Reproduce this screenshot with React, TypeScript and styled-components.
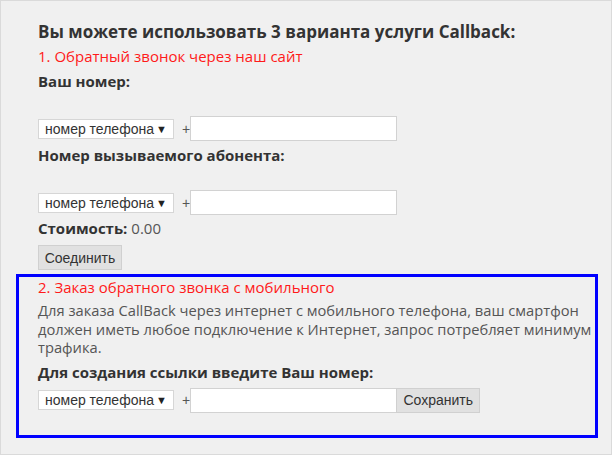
import React from "react";
import styled, { createGlobalStyle } from "styled-components";

const GlobalStyle = createGlobalStyle`
  html, body {
    margin: 0;
    padding: 0;
    background: #ffffff;
  }
  body {
    font-family: "Open Sans", "Liberation Sans", sans-serif;
  }
`;

const Panel = styled.div`
  box-sizing: border-box;
  width: 612px;
  height: 455px;
  border: 1px solid #dadada;
  background: #f0f0f0;
  padding: 18px 13px 0 15px;
`;

const Section = styled.div`
  padding-left: 22px;
`;

const Heading = styled.div`
  font-size: 17px;
  font-weight: 700;
  line-height: 25px;
  color: #333333;
`;

const RedTitle = styled.div<{ $lh?: number }>`
  font-size: 15px;
  line-height: ${(p) => p.$lh ?? 25}px;
  color: #ff1a1a;
`;

const Label = styled.div<{ $mt?: number }>`
  font-size: 15px;
  font-weight: 700;
  line-height: 25px;
  color: #333333;
  margin-top: ${(p) => p.$mt ?? 0}px;
`;

const Row = styled.div<{ $mt?: number }>`
  display: flex;
  align-items: center;
  height: 25px;
  margin-top: ${(p) => p.$mt ?? 0}px;
`;

const SelectBox = styled.div`
  box-sizing: border-box;
  width: 136px;
  height: 20px;
  display: flex;
  align-items: center;
  justify-content: space-between;
  padding: 0 6px 0 6px;
  background: #ffffff;
  border: 1px solid #d6d6d6;
  font-family: "Liberation Sans", Arial, sans-serif;
  font-size: 14px;
  color: #333333;
`;

const Arrow = styled.span`
  font-size: 11px;
  color: #222222;
`;

const Plus = styled.span`
  margin-left: 8px;
  font-family: "Liberation Sans", Arial, sans-serif;
  font-size: 14px;
  color: #555555;
`;

const TextInput = styled.input`
  box-sizing: border-box;
  width: 207px;
  height: 25px;
  margin: 0;
  padding: 0 4px;
  background: #ffffff;
  border: 1px solid #d2d2d2;
  outline: none;
`;

const Button = styled.button<{ $w: number; $join?: boolean }>`
  box-sizing: border-box;
  width: ${(p) => p.$w}px;
  height: 25px;
  margin: 0 0 0 ${(p) => (p.$join ? -1 : 0)}px;
  padding: 0;
  background: #e1e1e1;
  border: 1px solid #d0d0d0;
  font-family: "Liberation Sans", Arial, sans-serif;
  font-size: 14px;
  color: #333333;
`;

const Cost = styled.div`
  font-size: 15px;
  line-height: 25px;
  color: #555555;
  margin-top: 1px;

  b {
    color: #333333;
  }
`;

const ButtonRow = styled.div`
  margin-top: 4px;
  height: 25px;
`;

const MobileBox = styled.div`
  margin-top: 4px;
  border: 3px solid #0000ff;
  padding: 0 2px 22px 19px;
`;

const Text = styled.p`
  margin: 4px 0 0;
  font-size: 14.7px;
  line-height: 18.5px;
  color: #555555;
  white-space: nowrap;
`;

const PhoneSelect: React.FC = () => (
  <SelectBox>
    <span>номер телефона</span>
    <Arrow>▼</Arrow>
  </SelectBox>
);

const App: React.FC = () => {
  return (
    <>
      <GlobalStyle />
      <Panel>
        <Section>
          <Heading>Вы можете использовать 3 варианта услуги Callback:</Heading>
          <RedTitle>1. Обратный звонок через наш сайт</RedTitle>
          <Label>Ваш номер:</Label>
          <Row $mt={22}>
            <PhoneSelect />
            <Plus>+</Plus>
            <TextInput type="text" />
          </Row>
          <Label $mt={2}>Номер вызываемого абонента:</Label>
          <Row $mt={22}>
            <PhoneSelect />
            <Plus>+</Plus>
            <TextInput type="text" />
          </Row>
          <Cost>
            <b>Стоимость:</b> 0.00
          </Cost>
          <ButtonRow>
            <Button $w={84}>Соединить</Button>
          </ButtonRow>
        </Section>
        <MobileBox>
          <RedTitle $lh={20}>2. Заказ обратного звонка с мобильного</RedTitle>
          <Text>
            Для заказа CallBack через интернет с мобильного телефона, ваш смартфон
            <br />
            должен иметь любое подключение к Интернет, запрос потребляет минимум
            <br />
            трафика.
          </Text>
          <Label $mt={3}>Для создания ссылки введите Ваш номер:</Label>
          <Row $mt={3}>
            <PhoneSelect />
            <Plus>+</Plus>
            <TextInput type="text" />
            <Button $w={84} $join>
              Сохранить
            </Button>
          </Row>
        </MobileBox>
      </Panel>
    </>
  );
};

export default App;
